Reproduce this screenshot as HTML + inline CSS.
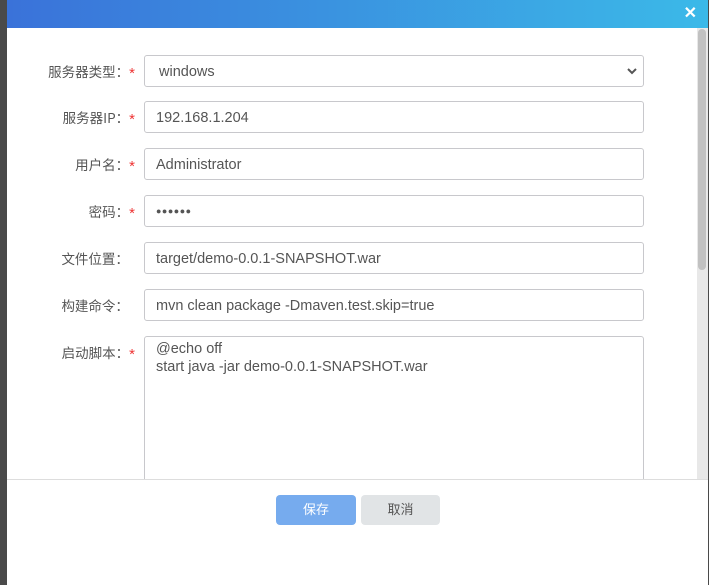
<!DOCTYPE html>
<html><head><meta charset="utf-8"><style>
*{box-sizing:border-box;margin:0;padding:0}
body{width:709px;height:585px;overflow:hidden;background:#4a4a4a;font-family:"Liberation Sans","Noto Sans CJK SC",sans-serif;position:relative}
.dlg{position:absolute;left:7px;top:0;width:701px;height:585px;background:#fff}
.hd{position:absolute;left:0;top:0;width:701px;height:28px;background:linear-gradient(90deg,#3a72d9,#3bb9e8)}
.x{position:absolute;right:11px;top:3px;color:#fff;font-size:16px;font-weight:bold}
.sb{position:absolute;left:690px;top:28px;width:11px;height:451px;background:#e8e8e8}
.th{position:absolute;left:1px;top:1px;width:8px;height:241px;background:#c1c1c1;border-radius:4px}
.lb{position:absolute;width:128px;text-align:right;font-size:13.5px;color:#555;left:0;font-family:"Noto Sans CJK SC","Liberation Sans",sans-serif;line-height:18px}
.lb i{color:#e33;font-style:normal;font-family:"Liberation Sans",sans-serif;font-size:15px;position:relative;top:1px}
.in{position:absolute;left:137px;width:500px;height:32px;border:1px solid #c8c8cc;border-radius:3px;font-size:14.5px;color:#555;padding:8px 11px 0}
.ft{position:absolute;left:0;top:479px;width:701px;border-top:1px solid #ddd}
.btn{position:absolute;top:495px;height:30px;width:80px;border-radius:4px;font-size:13px;text-align:center;line-height:30px}
</style></head><body><div class="dlg">
<div class="hd"><span class="x">✕</span></div>
<div class="lb" style="top:62px">服务器类型：<i>*</i></div>
<div class="in" style="top:55px;padding-left:14px">windows<svg style="position:absolute;right:6px;top:12px" width="10" height="7" viewBox="0 0 10 7"><path d="M1 1l4 4 4-4" stroke="#555" stroke-width="2" fill="none"/></svg></div>
<div class="lb" style="top:108px">服务器IP：<i>*</i></div>
<div class="in" style="top:101px">192.168.1.204</div>
<div class="lb" style="top:155px">用户名：<i>*</i></div>
<div class="in" style="top:148px">Administrator</div>
<div class="lb" style="top:202px">密码：<i>*</i></div>
<div class="in" style="top:195px;font-size:9px;padding-top:10px;letter-spacing:0.5px">●●●●●●</div>
<div class="lb" style="top:249px">文件位置：&nbsp;&nbsp;</div>
<div class="in" style="top:242px">target/demo-0.0.1-SNAPSHOT.war</div>
<div class="lb" style="top:296px">构建命令：&nbsp;&nbsp;</div>
<div class="in" style="top:289px">mvn clean package -Dmaven.test.skip=true</div>
<div class="lb" style="top:343px">启动脚本：<i>*</i></div>
<div class="in" style="top:336px;height:160px;padding-top:3px;line-height:18px">@echo off<br>start java -jar demo-0.0.1-SNAPSHOT.war</div>
<div class="sb"><div class="th"></div></div>
<div style="position:absolute;left:0;top:480px;width:701px;height:105px;background:#fff"></div>
<div class="ft"></div>
<div class="btn" style="left:269px;background:#76abee;color:#fff">保存</div>
<div class="btn" style="left:354px;width:79px;background:#e1e4e6;color:#555">取消</div>
</div></body></html>
